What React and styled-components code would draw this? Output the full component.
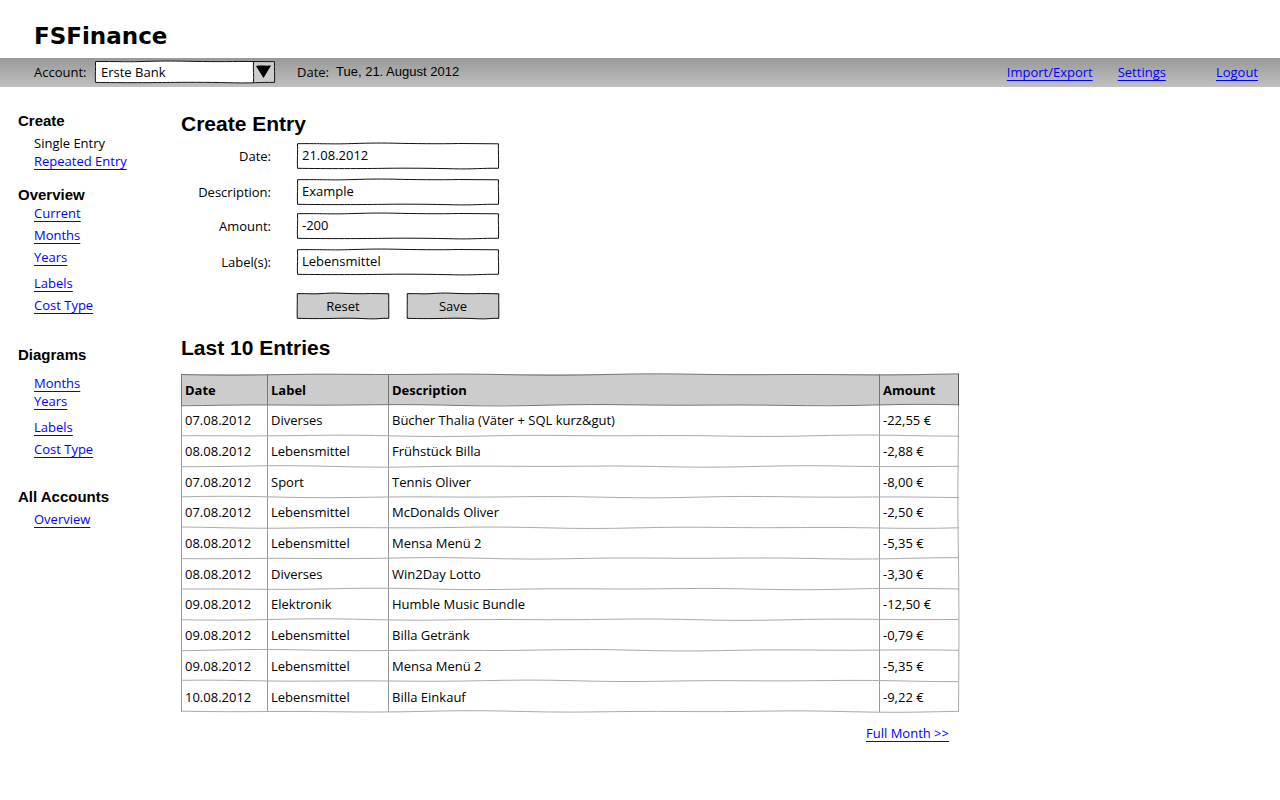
import React from "react";
import styled, { createGlobalStyle } from "styled-components";

const GlobalStyle = createGlobalStyle`
  * { box-sizing: border-box; }
  body {
    margin: 0;
    background: #fff;
    color: #000;
    font: 13px/18px "Open Sans", "Noto Sans", sans-serif;
  }
`;

const heading = `
  margin: 0;
  font-family: "Liberation Sans", Arial, sans-serif;
  font-weight: 700;
`;

const Header = styled.header`
  padding: 20px 34px 6px;
`;

const Brand = styled.h1`
  margin: 0;
  font: 700 23px/32px "DejaVu Sans", Verdana, sans-serif;
`;

const Toolbar = styled.div`
  display: flex;
  align-items: center;
  min-height: 29px;
  padding: 0 22px 1px 34px;
  background: linear-gradient(#999, #c0c0c0);
`;

const AccountLabel = styled.label`
  width: 61px;
`;

const SelectBox = styled.div`
  position: relative;
  width: 180px;
  height: 22px;
  margin-right: 22px;
  background: #fff;
`;

const Select = styled.select`
  display: block;
  width: 100%;
  height: 100%;
  padding: 0 26px 0 6px;
  border: 0;
  appearance: none;
  background: linear-gradient(#ccc, #ccc) right / 21px 100% no-repeat;
  color: #000;
  font: inherit;
`;

const Overlay = styled.svg`
  position: absolute;
  inset: 0;
  width: 100%;
  height: 100%;
  overflow: visible;
  pointer-events: none;
`;

const Today = styled.span`
  margin-left: 7px;
  font-family: "Liberation Sans", Arial, sans-serif;
`;

const Actions = styled.nav`
  display: flex;
  gap: 25px;
  margin-left: auto;
`;

const Link = styled.a`
  color: #00f;
  text-decoration: underline 1px #00f;
  text-underline-offset: 3px;
  text-decoration-skip-ink: none;
`;

const LogoutLink = styled(Link)`
  margin-left: 25px;
`;

const Body = styled.div`
  display: flex;
  align-items: flex-start;
  padding-top: 25px;
`;

const Sidebar = styled.nav`
  flex: 0 0 181px;
  padding-left: 18px;
`;

const Group = styled.section`
  margin-bottom: ${(p) => p.$after}px;
`;

const GroupTitle = styled.h3`
  ${heading}
  font-size: 15px;
  line-height: 18px;
`;

const Items = styled.ul`
  margin: 0;
  padding: 0 0 0 16px;
  list-style: none;
`;

const Item = styled.li`
  padding-top: ${(p) => p.$gap}px;
`;

const Main = styled.main`
  flex: 1;
  min-width: 0;
  max-width: 778px;
`;

const Title = styled.h2`
  ${heading}
  font-size: 21px;
  line-height: 24px;
`;

const Form = styled.form`
  padding: 7px 0 17px;
`;

const Field = styled.div`
  display: grid;
  grid-template-columns: 90px 202px;
  column-gap: 26px;
  align-items: center;
  margin-bottom: ${(p) => p.$after}px;
`;

const FieldLabel = styled.label`
  text-align: right;
`;

const Framed = styled.div`
  position: relative;
  height: 26px;
`;

const Input = styled.input`
  display: block;
  width: 100%;
  height: 100%;
  padding: 0 5px 2px;
  border: 0;
  background: #fff;
  color: #000;
  font: inherit;
`;

const Buttons = styled.div`
  display: flex;
  justify-content: space-between;
  width: 202px;
  margin-left: 116px;
`;

const Button = styled.button`
  position: relative;
  width: 92px;
  height: 26px;
  padding: 0;
  border: 0;
  background: #ccc;
  color: #000;
  font: inherit;
`;

const TableBox = styled.div`
  position: relative;
  margin: 14px 0 12px;
`;

const Table = styled.table`
  width: 100%;
  height: 338px;
  table-layout: fixed;
  border-collapse: separate;
  border-spacing: 0;
`;

const Th = styled.th`
  width: ${(p) => (p.$width ? `${p.$width}px` : "auto")};
  height: 31px;
  padding: 0 3px;
  border-left: 1px solid #777;
  background: #ccc;
  text-align: left;
`;

const Td = styled.td`
  padding: 0 3px;
  border-left: 1px solid #999;
`;

const More = styled.div`
  padding-right: 10px;
  text-align: right;
`;

function Frame() {
  return (
    <Overlay viewBox="0 0 200 26" preserveAspectRatio="none" aria-hidden="true">
      <path
        d="M.5 .7C25 .4 32 1.2 50 .7S78 -.2 96 .2S142 1 160 .5L199.5 .8C199 8 200 17 199.5 25.3C184 25 174 26.3 155 25.8S108 25 88 25.3S28 25.8 .5 25.3C0 17 1 8 .5 .7Z"
        fill="none"
        stroke="#111"
        vectorEffect="non-scaling-stroke"
      />
    </Overlay>
  );
}

const TABLE_W = 778;
const TABLE_H = 338;

function wobble(row, rows) {
  const base = 0.5 + (row * (TABLE_H - 1)) / rows;
  const points = [];
  for (let x = 0; x <= TABLE_W; x += TABLE_W / 36) {
    const y = base + Math.sin((x / TABLE_W) * 29 + row * 2.3) * 0.4 + Math.sin((x / TABLE_W) * 17 + row) * 0.4;
    points.push(`${x.toFixed(1)},${y.toFixed(2)}`);
  }
  return points.join(" ");
}

function TableLines({ rows }) {
  return (
    <Overlay viewBox={`0 0 ${TABLE_W} ${TABLE_H}`} preserveAspectRatio="none" aria-hidden="true">
      {Array.from({ length: rows + 1 }, (_, row) => (
        <polyline key={row} points={wobble(row, rows)} fill="none" stroke={row < 2 ? "#777" : "#aaa"} />
      ))}
      <path d="M777.5 0V31" fill="none" stroke="#555" />
      <path d="M777.5 31C777.5 80 776.5 110 777 150S778.5 230 777.5 338" fill="none" stroke="#aaa" />
    </Overlay>
  );
}

const groups = [
  { title: "Create", after: 16, items: [["Single Entry", 4, true], ["Repeated Entry", 0]] },
  { title: "Overview", after: 32, items: [["Current", 0], ["Months", 4], ["Years", 4], ["Labels", 8], ["Cost Type", 4]] },
  { title: "Diagrams", after: 30, items: [["Months", 10], ["Years", 0], ["Labels", 8], ["Cost Type", 4]] },
  { title: "All Accounts", after: 0, items: [["Overview", 4]] },
];

const fields = [
  { id: "date", label: "Date:", value: "21.08.2012", after: 10 },
  { id: "description", label: "Description:", value: "Example", after: 8 },
  { id: "amount", label: "Amount:", value: "-200", after: 10 },
  { id: "labels", label: "Label(s):", value: "Lebensmittel", after: 18 },
];

const entries = [
  ["07.08.2012", "Diverses", "Bücher Thalia (Väter + SQL kurz&gut)", "-22,55 €"],
  ["08.08.2012", "Lebensmittel", "Frühstück Billa", "-2,88 €"],
  ["07.08.2012", "Sport", "Tennis Oliver", "-8,00 €"],
  ["07.08.2012", "Lebensmittel", "McDonalds Oliver", "-2,50 €"],
  ["08.08.2012", "Lebensmittel", "Mensa Menü 2", "-5,35 €"],
  ["08.08.2012", "Diverses", "Win2Day Lotto", "-3,30 €"],
  ["09.08.2012", "Elektronik", "Humble Music Bundle", "-12,50 €"],
  ["09.08.2012", "Lebensmittel", "Billa Getränk", "-0,79 €"],
  ["09.08.2012", "Lebensmittel", "Mensa Menü 2", "-5,35 €"],
  ["10.08.2012", "Lebensmittel", "Billa Einkauf", "-9,22 €"],
];

export default function App() {
  return (
    <>
      <GlobalStyle />
      <Header>
        <Brand>FSFinance</Brand>
      </Header>
      <Toolbar>
        <AccountLabel htmlFor="account">Account:</AccountLabel>
        <SelectBox>
          <Select id="account" defaultValue="Erste Bank">
            <option>Erste Bank</option>
          </Select>
          <Frame />
          <Overlay viewBox="0 0 180 22" aria-hidden="true">
            <path d="M158.5 0.5C158 8 159 15 158.5 21.5" fill="none" stroke="#111" />
            <path d="M161 5C166 4 171 5 176 4.500L168.500 17Z" fill="#000" />
          </Overlay>
        </SelectBox>
        <span>Date:</span>
        <Today>Tue, 21. August 2012</Today>
        <Actions>
          <Link href="#import">Import/Export</Link>
          <Link href="#settings">Settings</Link>
          <LogoutLink href="#logout">Logout</LogoutLink>
        </Actions>
      </Toolbar>
      <Body>
        <Sidebar>
          {groups.map((group) => (
            <Group key={group.title} $after={group.after}>
              <GroupTitle>{group.title}</GroupTitle>
              <Items>
                {group.items.map(([name, gap, current]) => (
                  <Item key={name} $gap={gap}>
                    {current ? name : <Link href="#view">{name}</Link>}
                  </Item>
                ))}
              </Items>
            </Group>
          ))}
        </Sidebar>
        <Main>
          <Title>Create Entry</Title>
          <Form onSubmit={(e) => e.preventDefault()}>
            {fields.map((f) => (
              <Field key={f.id} $after={f.after}>
                <FieldLabel htmlFor={f.id}>{f.label}</FieldLabel>
                <Framed>
                  <Input id={f.id} defaultValue={f.value} />
                  <Frame />
                </Framed>
              </Field>
            ))}
            <Buttons>
              <Button type="reset">Reset<Frame /></Button>
              <Button type="submit">Save<Frame /></Button>
            </Buttons>
          </Form>
          <Title>Last 10 Entries</Title>
          <TableBox>
            <Table>
              <thead>
                <tr>
                  <Th $width={86}>Date</Th>
                  <Th $width={121}>Label</Th>
                  <Th>Description</Th>
                  <Th $width={80}>Amount</Th>
                </tr>
              </thead>
              <tbody>
                {entries.map((row, i) => (
                  <tr key={i}>
                    {row.map((cell, j) => (
                      <Td key={j}>{cell}</Td>
                    ))}
                  </tr>
                ))}
              </tbody>
            </Table>
            <TableLines rows={entries.length + 1} />
          </TableBox>
          <More>
            <Link href="#month">Full Month &gt;&gt;</Link>
          </More>
        </Main>
      </Body>
    </>
  );
}
